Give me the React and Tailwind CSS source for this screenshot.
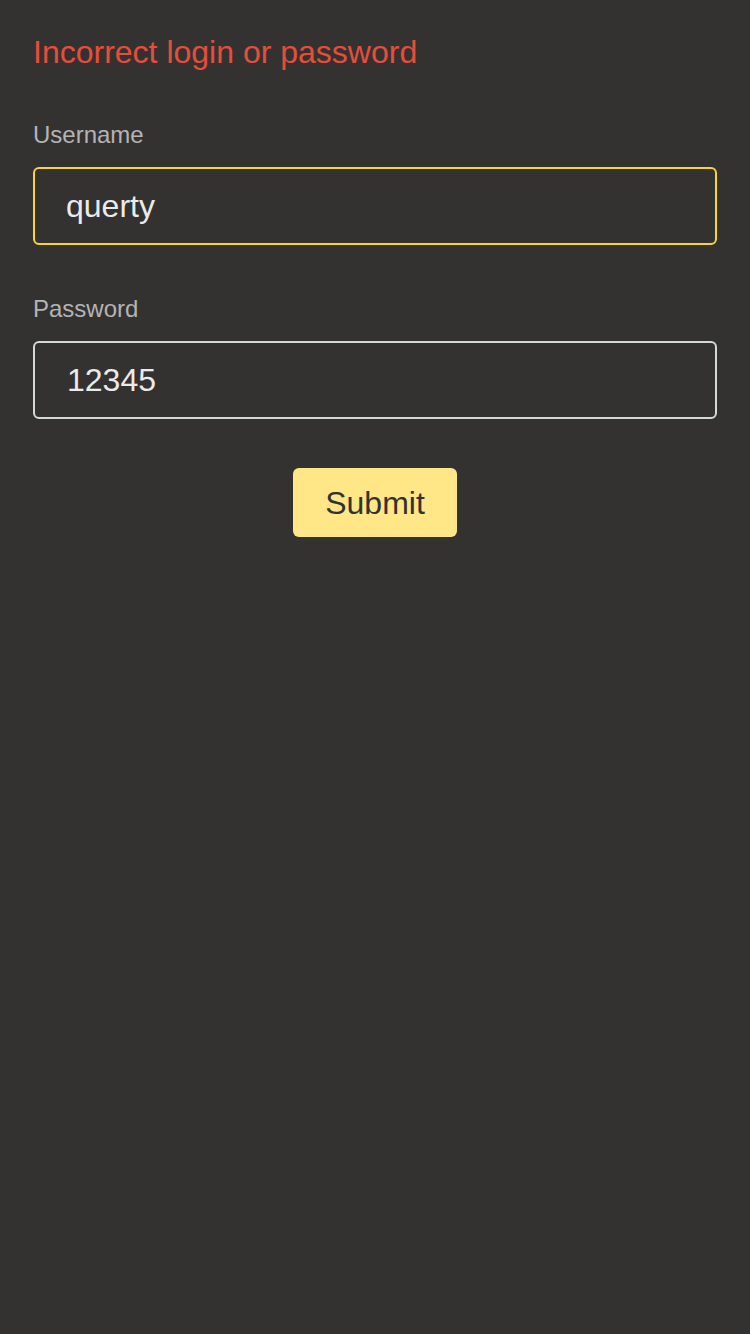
import React from 'react';

export default function App() {
  return (
    <div className="min-h-[1334px] bg-[#333230] px-[33px] font-['Liberation_Sans',Arial,sans-serif]">
      <p className="pt-[36px] text-[32px] leading-[32px] text-[#e64d3b]">
        Incorrect login or password
      </p>

      <form className="flex flex-col" onSubmit={(e) => e.preventDefault()}>
        <label className="mt-[55px] text-[24px] leading-[24px] text-[#b4b4b4]">Username</label>
        <input
          type="text"
          defaultValue="querty"
          className="mt-[20px] h-[78px] w-full rounded-[6px] border-2 border-[#f6d33f] bg-transparent px-[31px] text-[32px] text-[#ebebeb] outline-none"
        />

        <label className="mt-[52px] text-[24px] leading-[24px] text-[#b4b4b4]">Password</label>
        <input
          type="text"
          defaultValue="12345"
          className="mt-[20px] h-[78px] w-full rounded-[6px] border-2 border-[#d3dad9] bg-transparent px-[32px] text-[32px] text-[#ebebeb] outline-none"
        />

        <div className="mt-[49px] flex justify-center">
          <button
            type="submit"
            className="h-[69px] w-[164px] rounded-[6px] bg-[#ffe788] text-[32px] text-[#333230]"
          >
            Submit
          </button>
        </div>
      </form>
    </div>
  );
}
